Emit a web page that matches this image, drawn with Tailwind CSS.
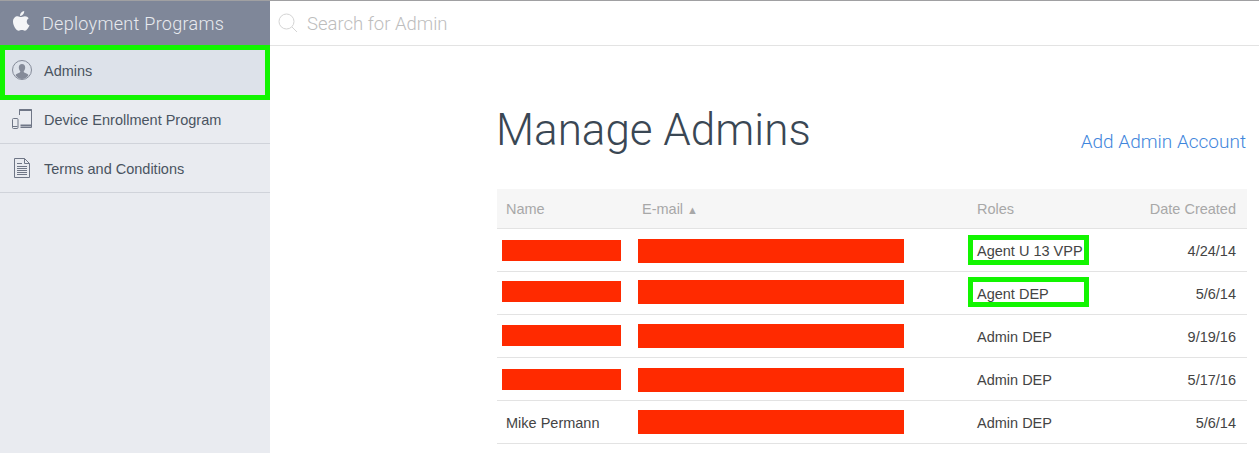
<!DOCTYPE html>
<html lang="en">

<head>
    <meta charset="UTF-8">
    <meta name="viewport" content="width=device-width, initial-scale=1.0">
    <script src="https://cdn.jsdelivr.net/npm/@tailwindcss/browser@4"></script>
    <title>Manage Admins</title>
</head>

<body class="h-[453px] overflow-hidden bg-white font-['Liberation_Sans',sans-serif]">
    <div class="flex h-[453px]">
        <!-- sidebar -->
        <aside class="w-[270px] shrink-0 bg-[#e9ebf0] text-[#4a5461]">
            <div class="h-[45px] border-t border-[#a0a0a2] bg-[#7f8799] flex items-center pl-3 text-[#e8eaef]">
                <svg class="w-[18px] h-[22px] -mt-1" viewBox="0 0 18 22" fill="#f4f5f7">
                    <path d="M12.2 1c.1 1.500-.4 2.700-1.200 3.600-.8.900-1.800 1.400-2.900 1.300C7.900 4.500 8.500 3.300 9.300 2.500 10.100 1.700 11.100 1.100 12.200 1zM13 6.200c1.500 0 2.900.8 3.700 2-2.900 1.800-2.400 5.900.8 7.100-.9 2.400-2.800 5.400-4.600 5.400-1.100 0-1.800-.7-3.100-.7-1.300 0-2 .7-3.100.7C4.300 20.700 1 15.700 1 11.700c0-3.600 2.300-5.500 4.600-5.500 1.400 0 2.500.9 3.300.9.800 0 2.100-.9 4.100-.9z" />
                </svg>
                <span class="ml-[12px] text-[18px] font-['Roboto',sans-serif] font-light tracking-[0.3px]">Deployment Programs</span>
            </div>
            <a class="h-[55px] border-[5px] border-[#12f500] bg-[#dde2ea] flex items-center pl-[7px] text-[14.500px]">
                <svg class="w-[20px] h-[20px] -mt-[5px]" viewBox="0 0 20 20">
                    <circle cx="10" cy="10" r="9.500" fill="none" stroke="#858b99" stroke-width="1" />
                    <path d="M10 4c2 0 3.200 1.500 3.200 3.500 0 1.500-.6 2.800-1.400 3.600-.2.800 0 1.300 1 1.700 1.500.6 3 1.200 3.700 2.400A9 9 0 0 1 10 19a9 9 0 0 1-6.500-3.800c.7-1.200 2.200-1.800 3.700-2.400 1-.4 1.200-.9 1-1.700-.8-.8-1.400-2.100-1.400-3.600C6.800 5.500 8 4 10 4z" fill="#858b99" />
                </svg>
                <span class="ml-[12px] -mt-[1px]">Admins</span>
            </a>
            <a class="h-[44px] pb-[1px] border-b border-[#d0d3da] flex items-center pl-3 text-[14.500px]">
                <svg class="w-[20px] h-[20px] -mt-[4px]" viewBox="0 0 20 20" fill="none" stroke="#6f7686">
                    <path d="M7.500 6V.5h12v18H8.500" />
                    <path d="M7.500 1h12M8.500 16.500h11" stroke-width="2" />
                    <rect x="0.500" y="9.500" width="5.500" height="10" rx="1" stroke-width="1" />
                    <path d="M1 17.500h4.500" stroke-width="1" />
                </svg>
                <span class="ml-[12px]">Device Enrollment Program</span>
            </a>
            <a class="h-[49px] pt-[3px] border-b border-[#d0d3da] flex items-center pl-3 text-[14.500px]">
                <svg class="w-[20px] h-[20px] -mt-[3px]" viewBox="0 0 20 20" fill="none" stroke="#6f7686" stroke-width="1">
                    <path d="M2.500 .5h10l5 5v14h-15z" />
                    <path d="M12.500 .5v5h5" />
                    <path d="M5 5.500h5M5 8.500h10M5 10.500h10M5 12.500h10M5 14.500h10M5 16.500h10" />
                </svg>
                <span class="ml-[12px]">Terms and Conditions</span>
            </a>
        </aside>

        <main class="flex-1 min-w-0">
            <!-- search -->
            <div class="h-[46px] border-t border-[#a0a0a2] border-b-[#e3e3e3] border-b flex items-center pl-[8px]">
                <svg class="w-[20px] h-[20px]" viewBox="0 0 20 20" fill="none" stroke="#d4d4d4" stroke-width="1">
                    <circle cx="8.500" cy="8.500" r="7.500" />
                    <path d="M14 14l5 5" />
                </svg>
                <span class="ml-[9px] pt-[3px] text-[18.500px] font-['Roboto',sans-serif] font-light text-[#bdbdbd]">Search for Admin</span>
            </div>

            <div class="ml-[227px] mr-[12px]">
                <div class="flex justify-between">
                    <h1 class="mt-[54px] -ml-[1px] h-[89px] text-[44px] leading-[60px] font-['Roboto',sans-serif] font-light text-[#3a4754]">Manage Admins</h1>
                    <a class="mt-[84px] mr-[1px] text-[19px] leading-[24px] font-['Roboto',sans-serif] font-light text-[#3f86dc]">Add Admin Account</a>
                </div>

                <!-- table -->
                <div class="grid grid-cols-[141px_335px_1fr] h-[40px] items-center bg-[#f6f6f6] border-b border-[#e3e3e3] text-[14.500px] text-[#a8a8a8]">
                    <div class="pl-[9px] pt-[3px]">Name</div>
                    <div class="pl-[4px] pt-[3px] flex items-center">E-mail<span class="ml-[4px] text-[11px]">▲</span></div>
                    <div class="pl-[4px] pt-[3px] flex justify-between pr-[11px]"><span>Roles</span><span>Date Created</span></div>
                </div>

                <div class="relative grid grid-cols-[141px_335px_1fr] h-[43px] items-center border-b border-[#e3e3e3] text-[14.500px] text-[#444]">
                    <div class="pl-[5px] self-start mt-[11px]"><div class="w-[119px] h-[21px] bg-[#ff2a00]"></div></div>
                    <div class="self-start mt-[10px]"><div class="w-[266px] h-[24px] bg-[#ff2a00]"></div></div>
                    <div class="pt-[3px] pl-[4px] flex justify-between pr-[11px]"><span>Agent U 13 VPP</span><span>4/24/14</span></div>
                    <div class="absolute left-[471px] top-[6px] w-[121px] h-[30px] border-[5px] border-[#12f500]"></div>
                </div>
                <div class="relative grid grid-cols-[141px_335px_1fr] h-[43px] items-center border-b border-[#e3e3e3] text-[14.500px] text-[#444]">
                    <div class="pl-[5px] self-start mt-[9px]"><div class="w-[119px] h-[21px] bg-[#ff2a00]"></div></div>
                    <div class="self-start mt-[8px]"><div class="w-[266px] h-[24px] bg-[#ff2a00]"></div></div>
                    <div class="pt-[3px] pl-[4px] flex justify-between pr-[11px]"><span>Agent DEP</span><span>5/6/14</span></div>
                    <div class="absolute left-[471px] top-[5px] w-[121px] h-[30px] border-[5px] border-[#12f500]"></div>
                </div>
                <div class="grid grid-cols-[141px_335px_1fr] h-[43px] items-center border-b border-[#e3e3e3] text-[14.500px] text-[#444]">
                    <div class="pl-[5px] self-start mt-[10px]"><div class="w-[119px] h-[21px] bg-[#ff2a00]"></div></div>
                    <div class="self-start mt-[9px]"><div class="w-[266px] h-[24px] bg-[#ff2a00]"></div></div>
                    <div class="pl-[4px] pt-[3px] flex justify-between pr-[11px]"><span>Admin DEP</span><span>9/19/16</span></div>
                </div>
                <div class="grid grid-cols-[141px_335px_1fr] h-[43px] items-center border-b border-[#e3e3e3] text-[14.500px] text-[#444]">
                    <div class="pl-[5px] self-start mt-[11px]"><div class="w-[119px] h-[21px] bg-[#ff2a00]"></div></div>
                    <div class="self-start mt-[10px]"><div class="w-[266px] h-[24px] bg-[#ff2a00]"></div></div>
                    <div class="pl-[4px] pt-[3px] flex justify-between pr-[11px]"><span>Admin DEP</span><span>5/17/16</span></div>
                </div>
                <div class="grid grid-cols-[141px_335px_1fr] h-[43px] items-center border-b border-[#e3e3e3] text-[14.500px] text-[#444]">
                    <div class="pl-[9px] pt-[3px]">Mike Permann</div>
                    <div class="self-start mt-[9px]"><div class="w-[266px] h-[24px] bg-[#ff2a00]"></div></div>
                    <div class="pl-[4px] pt-[3px] flex justify-between pr-[11px]"><span>Admin DEP</span><span>5/6/14</span></div>
                </div>
            </div>
        </main>
    </div>
</body>

</html>
